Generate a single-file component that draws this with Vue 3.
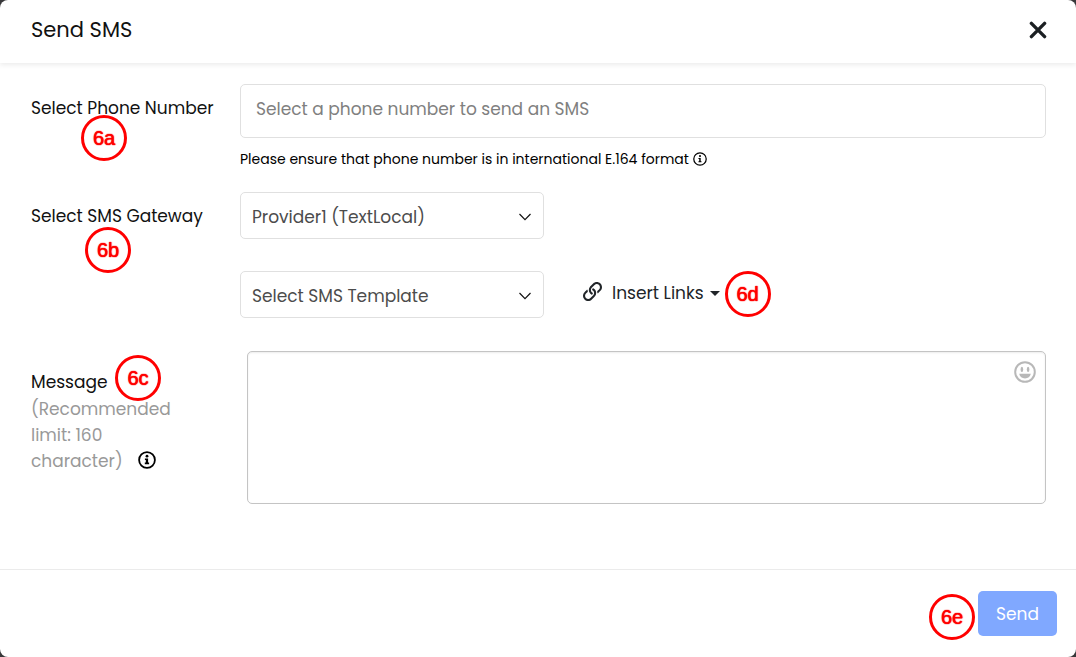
<script setup>
import { ref } from 'vue'

const phone = ref('')
const gateway = ref('Provider1 (TextLocal)')
const template = ref('Select SMS Template')
const message = ref('')
</script>

<template>
  <main class="dialog" role="dialog" aria-labelledby="dialog-title">
    <header class="header">
      <h1 id="dialog-title" class="title">Send SMS</h1>
      <button class="plain" type="button" aria-label="Close">
        <svg width="18" height="18" viewBox="0 0 18 18" fill="none" stroke="#1b1f22" stroke-width="3.4" stroke-linecap="round">
          <path d="M2.4 2.4 15.6 15.6M15.6 2.4 2.4 15.6" />
        </svg>
      </button>
    </header>

    <form class="body" @submit.prevent>
      <div class="row">
        <div class="caption">
          <label for="phone">Select Phone Number</label>
          <span class="badge badge-a">6a</span>
        </div>
        <div>
          <input id="phone" v-model="phone" class="phone" type="text" placeholder="Select a phone number to send an SMS" />
          <p class="hint">
            <span>Please ensure that phone number is in international E.164 format</span>
            <svg width="14" height="14" viewBox="0 0 18 18" fill="none">
              <circle cx="9" cy="9" r="8" stroke="#000" stroke-width="1.6" />
              <circle cx="9" cy="5.3" r="1.3" fill="#000" />
              <path d="M7 7.6h2.9v4.2h1v1.4H7v-1.4h1V9H7z" fill="#000" />
            </svg>
          </p>
        </div>
      </div>

      <div class="row gateway-row">
        <div class="caption">
          <label for="gateway">Select SMS Gateway</label>
          <span class="badge badge-b">6b</span>
        </div>
        <div class="picker">
          <select id="gateway" v-model="gateway">
            <option>Provider1 (TextLocal)</option>
          </select>
          <svg class="chevron" width="14" height="8" viewBox="0 0 14 8" fill="none" stroke="#111" stroke-width="1.2"><path d="M1.5 1 7 6.6 12.5 1" /></svg>
        </div>
      </div>

      <div class="row template-row">
        <div></div>
        <div class="tools">
          <div class="picker">
            <select v-model="template" aria-label="SMS template">
              <option>Select SMS Template</option>
            </select>
            <svg class="chevron" width="14" height="8" viewBox="0 0 14 8" fill="none" stroke="#111" stroke-width="1.2"><path d="M1.5 1 7 6.6 12.5 1" /></svg>
          </div>
          <button class="plain links" type="button">
            <svg class="chain" width="19" height="19" viewBox="0 0 512 512" fill="#212529">
              <path d="M314.222 197.78c51.091 51.091 54.377 132.287 9.75 187.16-6.242 7.73-2.784 3.865-84.94 86.02-54.696 54.696-143.266 54.745-197.99 0-54.711-54.69-54.734-143.255 0-197.99 32.773-32.773 51.835-51.899 63.409-63.457 7.463-7.452 20.331-2.354 20.486 8.192a173.31 173.31 0 0 0 4.746 37.828c.966 4.029-.272 8.269-3.202 11.198L80.632 312.57c-32.755 32.775-32.887 85.892 0 118.8 32.775 32.755 85.892 32.887 118.8 0l75.19-75.2c32.718-32.725 32.777-86.013 0-118.79a83.722 83.722 0 0 0-22.814-16.229c-4.623-2.233-7.182-7.25-6.561-12.346 1.356-11.122 6.296-21.885 14.815-30.405l4.375-4.375c3.625-3.626 9.177-4.594 13.76-2.294 12.999 6.524 25.187 15.211 36.025 26.049zM470.958 41.04c-54.724-54.745-143.294-54.696-197.99 0-82.156 82.156-78.698 78.29-84.94 86.02-44.627 54.873-41.341 136.069 9.75 187.16 10.838 10.838 23.026 19.525 36.025 26.049 4.582 2.3 10.134 1.331 13.76-2.294l4.375-4.375c8.52-8.519 13.459-19.283 14.815-30.405.621-5.096-1.938-10.113-6.561-12.346a83.706 83.706 0 0 1-22.814-16.229c-32.777-32.777-32.718-86.065 0-118.79l75.19-75.2c32.908-32.887 86.025-32.755 118.8 0 32.887 32.908 32.755 86.025 0 118.8l-45.848 45.84c-2.93 2.929-4.168 7.169-3.202 11.198a173.31 173.31 0 0 1 4.746 37.828c.155 10.546 13.023 15.644 20.486 8.192 11.574-11.558 30.636-30.684 63.409-63.457 54.733-54.735 54.71-143.3-.001-197.991z" />
            </svg>
            <span>Insert Links</span>
            <svg class="caret" width="10" height="5" viewBox="0 0 10 5" fill="#212529"><path d="M0 0h10L5 5z" /></svg>
            <span class="badge badge-d">6d</span>
          </button>
        </div>
      </div>

      <div class="row message-row">
        <div class="caption">
          <label for="message">Message</label>
          <p class="note">
            (Recommended<br />limit: 160<br />
            <span class="note-end">character)
              <svg width="18" height="18" viewBox="0 0 18 18" fill="none">
                <circle cx="9" cy="9" r="7.9" stroke="#000" stroke-width="1.8" />
                <circle cx="9" cy="5.2" r="1.4" fill="#000" />
                <path d="M6.9 7.5h3.2v4.1h1v1.6H6.8v-1.6h1V9.1h-.9z" fill="#000" />
              </svg>
            </span>
          </p>
          <span class="badge badge-c">6c</span>
        </div>
        <div class="editor">
          <textarea id="message" v-model="message"></textarea>
          <button class="plain emoji" type="button" aria-label="Insert emoji">
            <svg width="22" height="22" viewBox="0 0 22 22" fill="none">
              <circle cx="11" cy="11" r="9.8" stroke="#b8b8b8" stroke-width="2" />
              <ellipse cx="7.9" cy="8.4" rx="1.3" ry="2.6" fill="#b8b8b8" />
              <ellipse cx="14.1" cy="8.4" rx="1.3" ry="2.6" fill="#b8b8b8" />
              <path d="M5.2 12.8h11.6c-.5 2.8-2.9 4.7-5.8 4.7s-5.3-1.9-5.8-4.7z" fill="#b8b8b8" />
            </svg>
          </button>
        </div>
      </div>
    </form>

    <footer class="footer">
      <button class="send" type="button">Send<span class="badge badge-e">6e</span></button>
    </footer>
  </main>
</template>

<style>
body {
  background: #38383a;
}
</style>

<style scoped>
* {
  box-sizing: border-box;
}
.dialog {
  display: flex;
  flex-direction: column;
  min-height: 100vh;
  background: #fff;
  border-radius: 8px;
  color: #111;
  font: 400 17px/26px Poppins, Inter, sans-serif;
}
.header {
  display: flex;
  align-items: center;
  justify-content: space-between;
  height: 63px;
  padding: 0 29px 3px 31px;
  box-shadow: 0 2px 5px rgba(0, 0, 0, 0.08);
}
.title {
  margin: 0;
  font-size: 21px;
  font-weight: 400;
}
.plain {
  display: flex;
  align-items: center;
  padding: 0;
  border: 0;
  background: none;
  color: inherit;
  font: inherit;
}
.body {
  flex: 1;
  padding: 21px 30px 32px 31px;
}
.row {
  display: grid;
  grid-template-columns: 209px 1fr;
}
.caption {
  position: relative;
  padding-top: 11px;
}
.phone,
select,
textarea {
  display: block;
  width: 100%;
  border: 1px solid #e0e0e0;
  border-radius: 5px;
  background: #fff;
  font: inherit;
}
.phone {
  height: 54px;
  padding: 0 15px 4px;
  color: #808080;
}
.phone::placeholder {
  color: #808080;
  opacity: 1;
}
.hint {
  display: flex;
  align-items: center;
  gap: 4px;
  margin: 8px 0 0;
  color: #000;
  font-size: 14px;
}
.gateway-row {
  margin-top: 20px;
}
.template-row {
  margin-top: 32px;
}
.message-row {
  margin-top: 33px;
}
.message-row .caption {
  padding-top: 18px;
}
.picker {
  position: relative;
  width: 304px;
}
select {
  height: 47px;
  padding: 3px 40px 0 11px;
  appearance: none;
  color: #4c4c4c;
}
.chevron {
  position: absolute;
  right: 12px;
  top: 21px;
  pointer-events: none;
}
.tools {
  display: flex;
  gap: 39px;
}
.links {
  position: relative;
  height: 44px;
  color: #212529;
}
.chain {
  margin-bottom: 4px;
}
.links span:not(.badge) {
  margin-left: 10px;
}
.caret {
  margin-left: 6px;
}
.note {
  margin: 1px 0 0;
  color: #999;
}
.note-end {
  display: flex;
  align-items: center;
  gap: 15px;
}
.note-end svg {
  margin-bottom: 3px;
}
.editor {
  position: relative;
  padding-left: 7px;
}
textarea {
  height: 153px;
  padding: 12px 44px 12px 12px;
  border-color: #c4c4c4;
  box-shadow: inset 0 1px 2px rgba(0, 0, 0, 0.08);
  resize: none;
}
.emoji {
  position: absolute;
  top: 10px;
  right: 10px;
}
.footer {
  display: flex;
  justify-content: flex-end;
  padding: 21px 19px;
  border-top: 1px solid #ebebeb;
}
.send {
  position: relative;
  width: 79px;
  height: 45px;
  padding: 0;
  border: 0;
  border-radius: 5px;
  background: #80a8ff;
  color: #fff;
  font: inherit;
}
.badge {
  position: absolute;
  display: flex;
  align-items: center;
  justify-content: center;
  width: 46px;
  height: 46px;
  border: 3px solid #f00;
  border-radius: 50%;
  color: #f00;
  font: 400 20px/20px "Liberation Sans", Arial, sans-serif;
  text-shadow: 0 0 1px #f00, 0 0 1px #f00;
}
.badge-a {
  left: 50px;
  top: 31px;
}
.badge-b {
  left: 54px;
  top: 35px;
}
.badge-c {
  left: 84px;
  top: 4px;
}
.badge-d {
  left: calc(100% + 5px);
  top: 0;
}
.badge-e {
  right: calc(100% + 3px);
  top: 3px;
}
</style>
